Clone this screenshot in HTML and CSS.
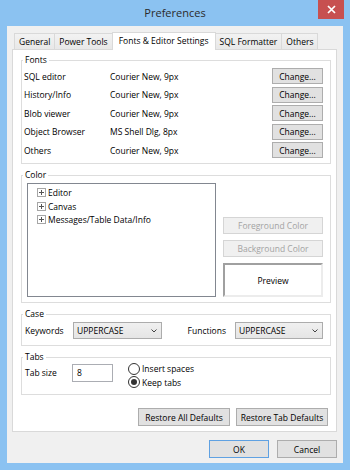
FILE: index.html
```html
<!DOCTYPE html>
<html lang="en">
<head>
    <meta charset="UTF-8">
    <meta name="viewport" content="width=device-width, initial-scale=1.0">
    <title>Preferences</title>
    <link rel="stylesheet" href="styles.css">
</head>
<body>
    <div class="window">
        <div class="titlebar">
            <div class="title">Preferences</div>
            <div class="close">
                <svg width="9" height="9" viewBox="0 0 9 9"><path d="M1 1L8 8M8 1L1 8" stroke="#fff" stroke-width="1.7"/></svg>
            </div>
        </div>

        <div class="client">
            <div class="tabs">
                <div class="tab">General</div>
                <div class="tab">Power Tools</div>
                <div class="tab active">Fonts &amp; Editor Settings</div>
                <div class="tab">SQL Formatter</div>
                <div class="tab">Others</div>
            </div>

            <div class="panel">
                <fieldset class="group">
                    <legend>Fonts</legend>
                    <div class="fonts">
                        <span>SQL editor</span><span>Courier New, 9px</span><button class="btn">Change...</button>
                        <span>History/Info</span><span>Courier New, 9px</span><button class="btn">Change...</button>
                        <span>Blob viewer</span><span>Courier New, 9px</span><button class="btn">Change...</button>
                        <span>Object Browser</span><span>MS Shell Dlg, 8px</span><button class="btn">Change...</button>
                        <span>Others</span><span>Courier New, 9px</span><button class="btn">Change...</button>
                    </div>
                </fieldset>

                <fieldset class="group">
                    <legend>Color</legend>
                    <div class="color">
                        <div class="tree">
                            <div class="tree-item"><svg class="plus" width="9" height="9" viewBox="0 0 9 9"><rect x="0.5" y="0.5" width="8" height="8" fill="#fff" stroke="#a6a6a6"/><path d="M2 4.5H7M4.5 2V7" stroke="#555"/></svg>Editor</div>
                            <div class="tree-item"><svg class="plus" width="9" height="9" viewBox="0 0 9 9"><rect x="0.5" y="0.5" width="8" height="8" fill="#fff" stroke="#a6a6a6"/><path d="M2 4.5H7M4.5 2V7" stroke="#555"/></svg>Canvas</div>
                            <div class="tree-item"><svg class="plus" width="9" height="9" viewBox="0 0 9 9"><rect x="0.5" y="0.5" width="8" height="8" fill="#fff" stroke="#a6a6a6"/><path d="M2 4.5H7M4.5 2V7" stroke="#555"/></svg>Messages/Table Data/Info</div>
                        </div>
                        <div class="color-side">
                            <button class="btn disabled">Foreground Color</button>
                            <button class="btn disabled">Background Color</button>
                            <div class="preview">Preview</div>
                        </div>
                    </div>
                </fieldset>

                <fieldset class="group">
                    <legend>Case</legend>
                    <div class="case">
                        <span class="case-label">Keywords</span>
                        <div class="combo keywords">UPPERCASE<svg width="6" height="4" viewBox="0 0 6 4"><path d="M0.5 0.5L3 3L5.5 0.5" fill="none" stroke="#444"/></svg></div>
                        <span class="functions-label">Functions</span>
                        <div class="combo functions">UPPERCASE<svg width="6" height="4" viewBox="0 0 6 4"><path d="M0.5 0.5L3 3L5.5 0.5" fill="none" stroke="#444"/></svg></div>
                    </div>
                </fieldset>

                <fieldset class="group">
                    <legend>Tabs</legend>
                    <div class="tabsize">
                        <span class="tabsize-label">Tab size</span>
                        <div class="textbox">8</div>
                        <div class="radios">
                            <div class="radio"><span class="circle"></span>Insert spaces</div>
                            <div class="radio"><span class="circle checked"></span>Keep tabs</div>
                        </div>
                    </div>
                </fieldset>

                <div class="restore">
                    <button class="btn">Restore All Defaults</button>
                    <button class="btn">Restore Tab Defaults</button>
                </div>
            </div>

            <div class="dialog-buttons">
                <button class="btn default">OK</button>
                <button class="btn">Cancel</button>
            </div>
        </div>
    </div>
</body>
</html>
```

FILE: styles.css
```css
body {
    margin: 0;
    font-family: "Open Sans", "Noto Sans", sans-serif;
    font-size: 8.5px;
    color: #000;
}
.window {
    width: 350px;
    height: 470px;
    background-color: #8bc2f1;
    display: flex;
    flex-direction: column;
}
.titlebar {
    height: 26px;
    display: grid;
    grid-template-columns: 1fr auto 1fr;
    align-items: start;
}
.title {
    grid-column: 2;
    font-size: 11px;
    line-height: 26px;
    color: #2b2b2b;
}
.close {
    grid-column: 3;
    justify-self: end;
    width: 26px;
    height: 19px;
    margin-right: 6px;
    background-color: #c75050;
    display: flex;
    align-items: center;
    justify-content: center;
}
.client {
    flex: 1;
    margin: 0 7px 7px;
    background-color: #f0f0f0;
    padding: 7px 6px 5px 5px;
    display: flex;
    flex-direction: column;
}
.tabs {
    display: flex;
    align-items: flex-start;
    height: 16px;
    padding-left: 2px;
}
.tab {
    box-sizing: border-box;
    height: 16px;
    padding: 0 4px;
    line-height: 15px;
    border: 1px solid #d9d9d9;
    border-bottom: none;
    margin-right: -1px;
    background: linear-gradient(#f2f2f2, #e8e8e8);
}
.tab.active {
    height: 18px;
    margin-top: -1px;
    padding: 0 6px;
    line-height: 16px;
    background: #fff;
    position: relative;
    z-index: 1;
}
.panel {
    box-sizing: border-box;
    height: 383px;
    border: 1px solid #d9d9d9;
    background-color: #fff;
    padding: 4px 5px 5px 8px;
    display: flex;
    flex-direction: column;
    gap: 5px;
}
.group {
    margin: 0;
    padding: 0;
    min-width: 0;
    border: 1px solid #dddddd;
}
.group legend {
    padding: 0 2px;
    margin-left: 1px;
    line-height: 12px;
}
.btn {
    box-sizing: border-box;
    height: 16px;
    padding: 0;
    border: 1px solid #adadad;
    background-color: #e1e1e1;
    font: inherit;
    color: #000;
    text-align: center;
}
.btn.disabled {
    height: 17px;
    border-color: #d5d5d5;
    background-color: #f0f0f0;
    color: #a3a3a3;
}
.btn.default {
    border-color: #5fa1e2;
}
.fonts {
    display: grid;
    grid-template-columns: 86px 1fr 51px;
    align-items: center;
    row-gap: 2.5px;
    padding: 2px 7px 5px 2px;
}
.color {
    display: grid;
    grid-template-columns: 1fr 100px;
    column-gap: 7px;
    padding: 2px 7px 5px 5px;
}
.tree {
    box-sizing: border-box;
    height: 114px;
    border: 1px solid #828790;
    padding: 2px 0 0 9px;
}
.tree-item {
    display: flex;
    align-items: center;
    gap: 2px;
    height: 13.5px;
}
.color-side {
    display: flex;
    flex-direction: column;
    justify-content: flex-end;
    gap: 6px;
}
.preview {
    box-sizing: border-box;
    height: 34px;
    border: 2px solid;
    border-color: #a0a0a0 #ececec #ececec #a0a0a0;
    background-color: #fff;
    display: flex;
    align-items: center;
    justify-content: center;
}
.case {
    display: flex;
    align-items: center;
    padding: 2px 7px 6px 3px;
}
.case-label {
    width: 48px;
}
.combo {
    box-sizing: border-box;
    height: 17px;
    border: 1px solid #acacac;
    background: linear-gradient(#f0f0f0, #e5e5e5);
    padding: 0 4px 0 3px;
    display: flex;
    align-items: center;
    justify-content: space-between;
}
.combo.keywords {
    width: 89px;
}
.combo.functions {
    width: 88px;
}
.functions-label {
    margin-left: auto;
    margin-right: 9px;
}
.tabsize {
    display: flex;
    align-items: flex-start;
    padding: 0 7px 5px 3px;
}
.tabsize-label {
    width: 47px;
    margin-top: 1px;
    line-height: 18px;
}
.textbox {
    box-sizing: border-box;
    width: 41px;
    height: 18px;
    margin-top: 1px;
    border: 1px solid #abadb3;
    background-color: #fff;
    padding-left: 4px;
    line-height: 16px;
}
.radios {
    margin-left: 15px;
    margin-top: -1px;
}
.radio {
    display: flex;
    align-items: center;
    gap: 2px;
    height: 13.5px;
}
.circle {
    box-sizing: border-box;
    width: 12px;
    height: 12px;
    border: 1px solid #333;
    border-radius: 50%;
    background-color: #fff;
    display: flex;
    align-items: center;
    justify-content: center;
}
.circle.checked::after {
    content: "";
    width: 6px;
    height: 6px;
    border-radius: 50%;
    background-color: #333;
}
.restore {
    display: flex;
    justify-content: flex-end;
    gap: 6px;
    margin-top: 8px;
    margin-right: 3px;
}
.restore .btn {
    width: 92px;
    height: 18px;
}
.dialog-buttons {
    display: flex;
    justify-content: flex-end;
    gap: 8px;
    margin-top: 8px;
}
.dialog-buttons .btn {
    width: 60px;
    height: 18px;
}
```
